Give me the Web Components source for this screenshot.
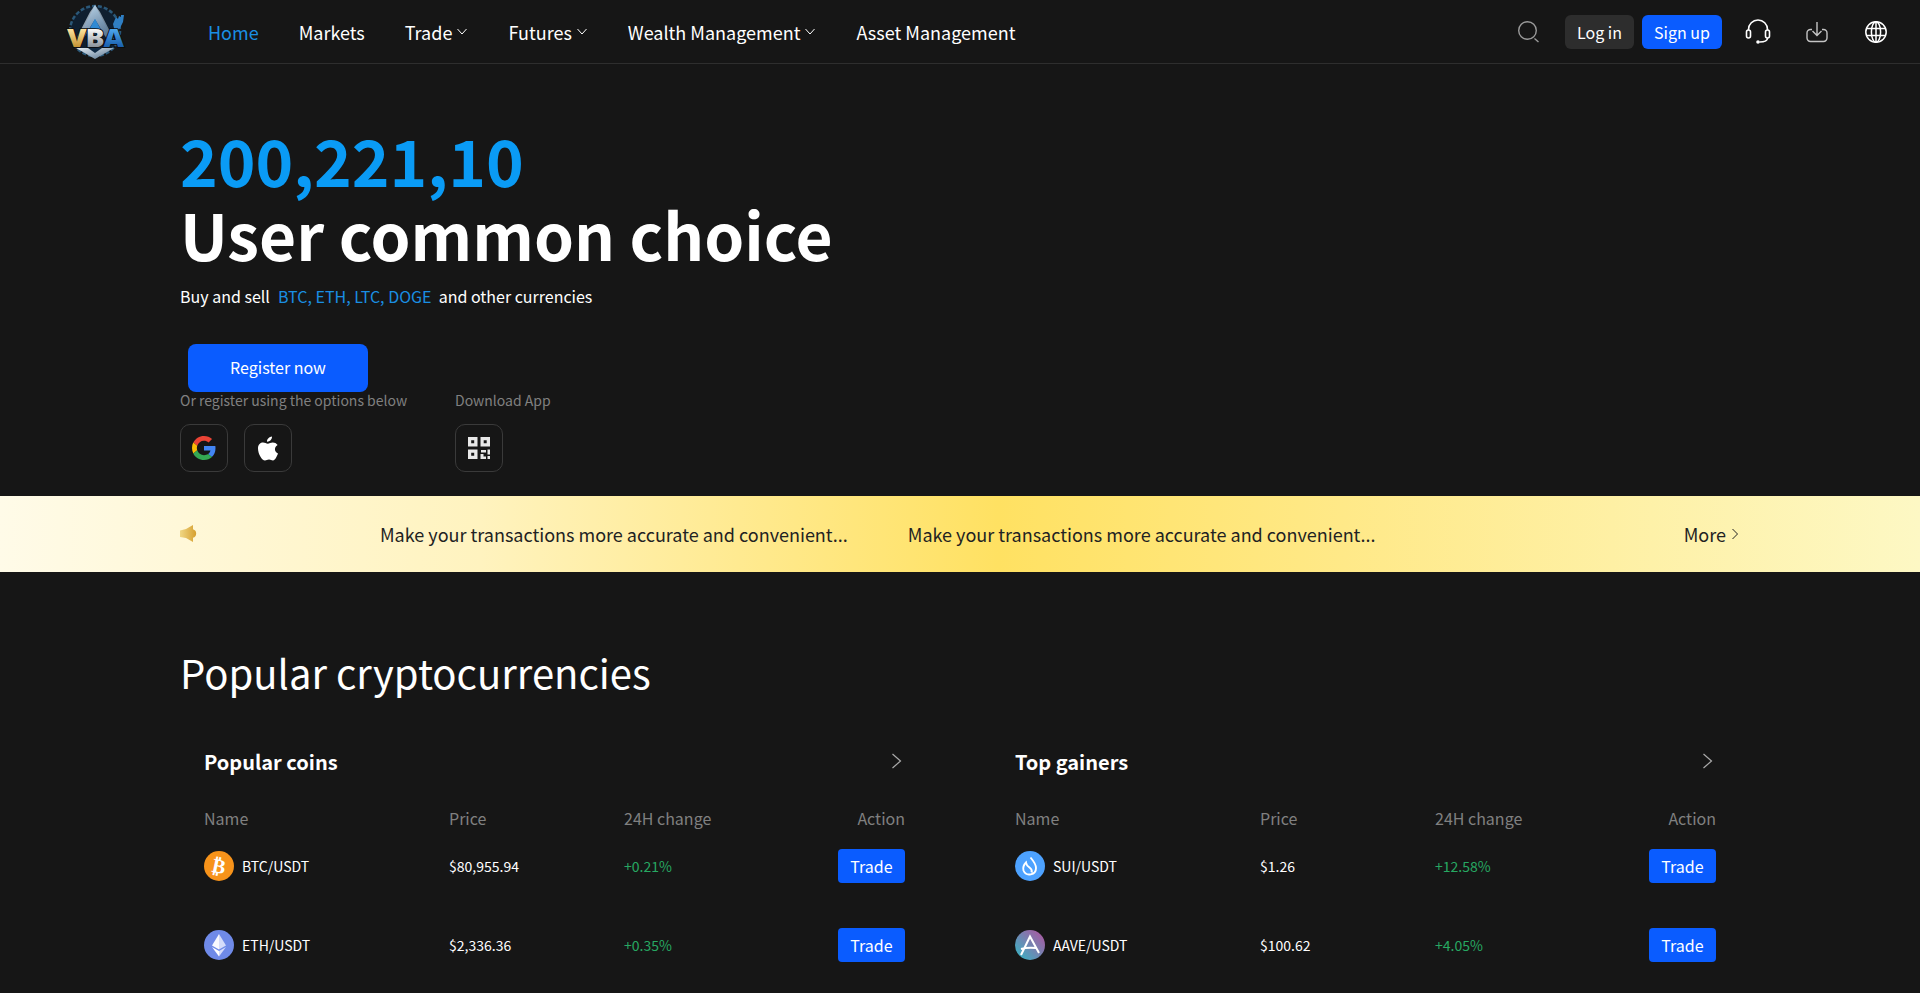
<!DOCTYPE html>
<html lang="en"><head><meta charset="utf-8"><title>VBA</title>
<style>
html,body{margin:0;padding:0;background:#161616;height:993px;overflow:hidden}
body{font-family:"Noto Sans CJK SC","Noto Sans",sans-serif;color:#fff}
</style></head><body>
<vb-header></vb-header>
<vb-hero></vb-hero>
<vb-banner></vb-banner>
<vb-market></vb-market>
<script>
const FONT='"Noto Sans CJK SC","Noto Sans",sans-serif';
const chev='<svg width="12" height="12" viewBox="0 0 12 12" fill="none" stroke="currentColor" stroke-width="1"><path d="M1.500 3 6 8l4.500-5"/></svg>';
class Base extends HTMLElement{
  connectedCallback(){ if(!this.shadowRoot){this.attachShadow({mode:'open'}).innerHTML=this.render();} }
}
class VbLogo extends Base{render(){return `<style>:host{display:block;width:62px;height:60px}svg{display:block}text{font-family:"Open Sans","Liberation Sans",sans-serif;font-weight:800;paint-order:stroke;letter-spacing:-1px}</style>
<svg width="62" height="60" viewBox="0 0 62 60">
<defs>
<linearGradient id="b" x1="0" y1="0" x2="0" y2="1"><stop offset="0" stop-color="#6ab8ee"/><stop offset=".55" stop-color="#1d5f9e"/><stop offset="1" stop-color="#0c2b50"/></linearGradient>
<linearGradient id="s" x1="0" y1="0" x2="1" y2="1"><stop offset="0" stop-color="#e6eef5"/><stop offset="1" stop-color="#52708c"/></linearGradient>
<linearGradient id="g" gradientUnits="userSpaceOnUse" x1="0" y1="30" x2="0" y2="48"><stop offset="0" stop-color="#fbe09a"/><stop offset="1" stop-color="#c08e2c"/></linearGradient>
<linearGradient id="sv" gradientUnits="userSpaceOnUse" x1="0" y1="30" x2="0" y2="48"><stop offset="0" stop-color="#f6f6f6"/><stop offset="1" stop-color="#828b95"/></linearGradient>
<linearGradient id="bl" gradientUnits="userSpaceOnUse" x1="0" y1="30" x2="0" y2="48"><stop offset="0" stop-color="#4aa2ea"/><stop offset="1" stop-color="#165aa8"/></linearGradient>
</defs>
<circle cx="30" cy="31" r="25" fill="#0f1f30" stroke="#2b5878" stroke-width="2.500" stroke-dasharray="4 2"/>
<path d="M30 5 46 36H14Z" fill="url(#b)"/>
<path d="M30 5 35 12 50 41H43L30 19 17 41H10L25 12Z" fill="url(#s)" opacity=".8"/>
<path d="M30 19 38 34H22Z" fill="#2f8ad4"/>
<path d="M48 24l3-7 2 2 1-3 2 1 0-2 3 0-1 7-3 6-5 4z" fill="#2f7fc4"/>
<path d="M11 48H49L30 59Z" fill="url(#s)"/>
<path d="M23 48H37L30 53Z" fill="#102a44"/>
<text x="2" y="47" font-size="25" stroke="#0a0a0a" stroke-width="1.500" textLength="56" lengthAdjust="spacingAndGlyphs"><tspan fill="url(#g)">V</tspan><tspan fill="url(#sv)">B</tspan><tspan fill="url(#bl)">A</tspan></text>
</svg>`}}
customElements.define('vb-logo',VbLogo);
class VbHeader extends Base{render(){return `<style>
:host{display:flex;align-items:center;height:63px;border-bottom:1px solid #2e2e2e;box-sizing:content-box;font:400 18px/26px ${FONT};color:#fff;padding-left:65px;padding-right:31px}
vb-logo{margin-top:-3px}
nav{display:flex;gap:40px;margin-left:81px;flex:1}
a{display:flex;align-items:center;gap:4px;white-space:nowrap;color:#fff}
a.on{color:#1a8fe3}
a svg{margin-top:1px}
.r{display:flex;align-items:center;margin-right:1px}
.btn{height:34px;box-sizing:border-box;border-radius:6px;font-size:16px;line-height:34px;text-align:center;color:#fff}
.li{width:69px;background:#2d2d2d;margin-left:24px}
.su{width:80px;background:#0a5cff;margin-left:8px}
.r svg{display:block}
</style>
<vb-logo></vb-logo>
<nav><a class="on">Home</a><a>Markets</a><a>Trade ${chev}</a><a>Futures ${chev}</a><a>Wealth Management ${chev}</a><a>Asset Management</a></nav>
<div class="r">
<svg width="24" height="24" viewBox="0 0 24 24" fill="none" stroke="#9a9a9a" stroke-width="1.400"><circle cx="10.500" cy="10.500" r="8.800"/><path d="M17.500 18.500l4 3.500"/></svg>
<div class="btn li">Log in</div><div class="btn su">Sign up</div>
<svg style="margin-left:23px" width="26" height="26" viewBox="0 0 26 26" fill="none" stroke="#fff" stroke-width="1.600"><path d="M3.500 12V10.500a9.500 9.500 0 0 1 19 0V12"/><rect x="1.500" y="11" width="4" height="8" rx="2" fill="#161616"/><rect x="20.500" y="11" width="4" height="8" rx="2" fill="#161616"/><path d="M22.500 19c0 2.500-3 4-8 4"/><circle cx="13" cy="23" r="1.800" fill="#fff" stroke="none"/></svg>
<svg style="margin-left:35px" width="22" height="24" viewBox="0 0 22 24" fill="none" stroke="#c4c4c4" stroke-width="1.400"><path d="M6 9.500H4.500A3.500 3.500 0 0 0 1 13v5a3.500 3.500 0 0 0 3.500 3.500h13A3.500 3.500 0 0 0 21 18v-5a3.500 3.500 0 0 0-3.500-3.500H16"/><path d="M11 2v12.500M6.500 11l4.500 4.500 4.500-4.500"/></svg>
<svg style="margin-left:36px" width="24" height="24" viewBox="0 0 24 24" fill="none" stroke="#fff" stroke-width="1.500"><circle cx="12" cy="12" r="10.200"/><ellipse cx="12" cy="12" rx="4.600" ry="10.200"/><path d="M12 2v20M2.500 8.500h19M2.500 15.500h19"/></svg>
</div>`}}
customElements.define('vb-header',VbHeader);
class VbHero extends Base{render(){return `<style>
:host{display:block;box-sizing:border-box;height:432px;padding:58px 0 0 180px;color:#fff}
.n{font:700 64px/74px ${FONT};color:#0a9bf5}
h1{margin:0;font:700 64px/74px ${FONT}}
p{margin:14px 0 0;font:400 16px/24px ${FONT};white-space:pre}
p b{font-weight:400;color:#1a8fe3;margin-left:1px}
.reg{margin:36px 0 0 8px;width:180px;height:48px;border-radius:8px;background:#0a5cff;font:400 16px/46px ${FONT};text-align:center}
.opts{display:flex;margin-top:-2px}
.col{font:400 14px/20px ${FONT};color:#808080;white-space:nowrap}
.col.a{width:275px}
.ic{display:flex;gap:16px;margin-top:14px}
.box{width:48px;height:48px;box-sizing:border-box;border:1px solid #3a3a3a;border-radius:10px;display:flex;align-items:center;justify-content:center}
</style>
<div class="n">200,221,10</div>
<h1>User common choice</h1>
<p>Buy and sell  <b>BTC, ETH, LTC, DOGE</b>  and other currencies</p>
<div class="reg">Register now</div>
<div class="opts">
<div class="col a">Or register using the options below
<div class="ic">
<div class="box"><svg width="24" height="24" viewBox="0 0 48 48"><path fill="#EA4335" d="M24 9.500c3.500 0 6.700 1.200 9.200 3.600l6.900-6.900C35.900 2.400 30.500 0 24 0 14.600 0 6.500 5.400 2.600 13.200l8 6.200C12.400 13.700 17.700 9.500 24 9.500z"/><path fill="#4285F4" d="M47 24.500c0-1.600-.1-3.100-.4-4.500H24v9h12.900c-.6 3-2.300 5.500-4.800 7.200l7.700 6c4.500-4.200 7.200-10.300 7.200-17.700z"/><path fill="#FBBC05" d="M10.500 28.600c-.5-1.500-.8-3-.8-4.600s.3-3.200.8-4.600l-8-6.200C.9 16.400 0 20.100 0 24s.9 7.600 2.600 10.800l7.900-6.200z"/><path fill="#34A853" d="M24 48c6.500 0 11.900-2.100 15.900-5.800l-7.700-6c-2.200 1.400-4.900 2.300-8.200 2.300-6.300 0-11.600-4.200-13.500-9.900l-8 6.200C6.500 42.600 14.600 48 24 48z"/></svg></div>
<div class="box"><svg width="22" height="25" viewBox="0 0 22 24" fill="#fff"><path d="M15 0c.2 2.900-2.500 5.400-5 5.200 -.3-2.700 2.400-5 5-5.200z"/><path d="M21 17c-1.200 3-3 7-5 7-1.600 0-2.100-1-4-1s-2.500 1-4 1c-3 0-7-6.500-7-12C1 7.700 3.600 6 6.100 6c1.800 0 3.200 1.200 4.700 1.200C12.200 7.200 13.700 6 15.800 6c1.700 0 3.700.8 4.800 2.600-3.800 2.300-3.300 7 .4 8.400z"/></svg></div>
</div></div>
<div class="col">Download App
<div class="ic"><div class="box"><svg width="24" height="24" viewBox="0 0 24 24" fill="#e8e8e8"><path fill-rule="evenodd" d="M1 1h9.500v9.500H1zM4.200 4.200v3h3v-3zM13.500 1H23v9.500h-9.500zM16.700 4.200v3h3v-3zM1 13.500h9.500V23H1zM4.200 16.700v3h3v-3z"/><path d="M14 14h5v2.500h-5zM20.500 13.500H23v5h-2.500zM13.500 18h3v2.500h2.500V23h-5.500zM20.500 20H23v3h-2.500z"/></svg></div></div>
</div>
</div>`}}
customElements.define('vb-hero',VbHero);
class VbBanner extends Base{render(){return `<style>
:host{display:flex;align-items:center;height:76px;box-sizing:border-box;padding:0 180px;background:linear-gradient(90deg,#fffbe8 0%,#fff3bf 25%,#ffe162 52%,#ffe988 70%,#fdf8c4 100%);color:#222;font:400 18px/26px ${FONT}}
svg{display:block;margin-top:-2px}
.t{display:flex;gap:60px;margin-left:182px;flex:1;white-space:nowrap}
.m{display:flex;align-items:center;gap:5px;margin-left:-1px;margin-right:1px}
.m svg{margin:0}
</style>
<svg width="18" height="17" viewBox="0 0 18 17"><defs><linearGradient id="sp" x1="0" y1="0" x2="1" y2="0"><stop offset="0" stop-color="#f0d784"/><stop offset="1" stop-color="#d6a030"/></linearGradient></defs><path d="M0 5.500 6 4 13 0v4.200a4.500 4.500 0 0 1 0 8.600V17l-7-4-6-1z" fill="url(#sp)"/></svg>
<div class="t"><span>Make your transactions more accurate and convenient...</span><span>Make your transactions more accurate and convenient...</span></div>
<div class="m">More <svg width="8" height="14" viewBox="0 0 8 14" fill="none" stroke="#222" stroke-width="1"><path d="M1.500 2l5 5-5 5"/></svg></div>`}}
customElements.define('vb-banner',VbBanner);
const coin={
btc:'<svg width="30" height="30" viewBox="0 0 30 30"><circle cx="15" cy="15" r="15" fill="#f7931a"/><text x="15" y="22" font-family="DejaVu Sans" font-size="20" font-weight="700" fill="#fff" text-anchor="middle" transform="rotate(12 15 15)">₿</text></svg>',
eth:'<svg width="30" height="30" viewBox="0 0 30 30"><circle cx="15" cy="15" r="15" fill="#6f8ae8"/><path d="M15 4l-7 11.500 7 4z" fill="#fff" opacity=".95"/><path d="M15 4l7 11.500-7 4z" fill="#d5dcfa"/><path d="M8 17l7 9.500V21z" fill="#fff"/><path d="M22 17l-7 9.500V21z" fill="#d5dcfa"/></svg>',
sui:'<svg width="30" height="30" viewBox="0 0 30 30"><circle cx="15" cy="15" r="15" fill="#4da2ff"/><path d="M15.500 6.500c3 3.500 5.500 6.500 5.500 10.500a6.500 6.500 0 0 1-12.500 2.500c-.8-2.800.6-6 2.500-8c.3 2.500 1.800 3.800 3.500 5s3 2.700 2 5" fill="none" stroke="#fff" stroke-width="1.900"/></svg>',
aave:'<svg width="30" height="30" viewBox="0 0 30 30"><defs><linearGradient id="av" x1="1" y1="0" x2="0" y2="1"><stop offset="0" stop-color="#b6509e"/><stop offset="1" stop-color="#2ebac6"/></linearGradient></defs><circle cx="15" cy="15" r="15" fill="url(#av)"/><path d="M6 25 15 6.500 24 23M6 19c5-1.500 10-1.500 15-1" fill="none" stroke="#fff" stroke-width="2"/></svg>'};
class VbCoinRow extends Base{render(){const a=k=>this.getAttribute(k);return `<style>
:host{display:grid;grid-template-columns:245px 175px 1fr auto;align-items:center;height:34px;margin-bottom:45px;font:400 14px/20px ${FONT};color:#fff}
.nm{display:flex;align-items:center;gap:8px}
svg{display:block}
.c{color:#27a862}
.t{width:67px;height:34px;border-radius:4px;background:#0a5cff;font-size:16px;line-height:34px;text-align:center}
</style><div class="nm">${coin[a('icon')]}<span>${a('pair')}</span></div><div>${a('price')}</div><div class="c">${a('change')}</div><div class="t">Trade</div>`}}
customElements.define('vb-coin-row',VbCoinRow);
class VbCard extends Base{render(){return `<style>
:host{display:block;padding:0 24px}
.h{display:flex;justify-content:space-between;align-items:center;height:36px}
h3{margin:0;font:700 20px/30px ${FONT};color:#fff}
.h svg{margin-right:0;margin-top:-2px}
.th{display:grid;grid-template-columns:245px 175px 1fr auto;font:400 16px/24px ${FONT};color:#808080;margin:26px 0 19px}
</style>
<div class="h"><h3>${this.getAttribute('title')}</h3><svg width="16" height="18" viewBox="0 0 16 18" fill="none" stroke="#aaa" stroke-width="1.200"><path d="M3.500 2l8 7-8 7"/></svg></div>
<div class="th"><span>Name</span><span>Price</span><span>24H change</span><span>Action</span></div>
<slot></slot>`}}
customElements.define('vb-card',VbCard);
class VbMarket extends Base{render(){return `<style>
:host{display:block;padding:70px 180px 0;color:#fff}
h2{margin:0;font:400 40px/60px ${FONT}}
.g{display:grid;grid-template-columns:749px 749px;gap:62px;margin-top:42px}
</style>
<h2>Popular cryptocurrencies</h2>
<div class="g">
<vb-card title="Popular coins">
<vb-coin-row icon="btc" pair="BTC/USDT" price="$80,955.94" change="+0.21%"></vb-coin-row>
<vb-coin-row icon="eth" pair="ETH/USDT" price="$2,336.36" change="+0.35%"></vb-coin-row>
</vb-card>
<vb-card title="Top gainers">
<vb-coin-row icon="sui" pair="SUI/USDT" price="$1.26" change="+12.58%"></vb-coin-row>
<vb-coin-row icon="aave" pair="AAVE/USDT" price="$100.62" change="+4.05%"></vb-coin-row>
</vb-card>
</div>`}}
customElements.define('vb-market',VbMarket);
</script>
</body></html>
